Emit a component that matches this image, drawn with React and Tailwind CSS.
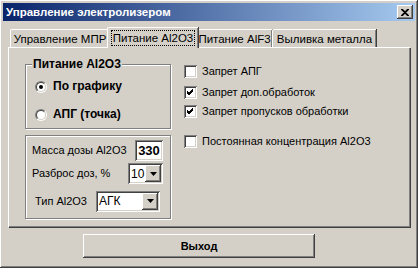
import React from 'react'

const raised =
  'shadow-[inset_-1px_-1px_#404040,inset_1px_1px_#ffffff,inset_-2px_-2px_#808080,inset_2px_2px_#d4d0c8]'
const sunken =
  'shadow-[inset_1px_1px_#808080,inset_-1px_-1px_#ffffff,inset_2px_2px_#404040,inset_-2px_-2px_#d4d0c8]'

function Check({ checked }) {
  return (
    <div className={`w-[13px] h-[13px] bg-white shrink-0 flex items-center justify-center ${sunken}`}>
      {checked && (
        <svg width="7" height="7" viewBox="0 0 7 7">
          <path d="M0 2 L2 4 L6 0 M0 3 L2 5 L6 1 M0 4 L2 6 L6 2" stroke="#000" strokeWidth="1" fill="none" />
        </svg>
      )}
    </div>
  )
}

function Radio({ on }) {
  return (
    <div className="relative w-[12px] h-[12px] shrink-0">
      <div className="absolute inset-0 rounded-full border border-t-[#808080] border-l-[#808080] border-r-white border-b-white" />
      <div className="absolute inset-[1px] rounded-full border border-t-[#404040] border-l-[#404040] border-r-[#d4d0c8] border-b-[#d4d0c8] bg-white flex items-center justify-center">
        {on && <div className="w-[4px] h-[4px] rounded-full bg-black" />}
      </div>
    </div>
  )
}

function Tab({ label, active, w }) {
  return (
    <div
      style={{ width: w }}
      className={
        active
          ? 'relative z-10 h-[21px] -mb-px -mx-[2px] bg-[#d4d0c8] border-t border-l border-white rounded-tl-[2px] shadow-[inset_-1px_0_#808080,1px_0_#404040] flex items-start justify-center pt-[3px]'
          : 'h-[18px] bg-[#d4d0c8] border-t border-l border-white rounded-tl-[2px] shadow-[inset_-1px_0_#808080,1px_0_#404040] flex items-start justify-center pt-[2px]'
      }
    >
      <span className={active ? 'outline outline-1 outline-dotted outline-black px-[1px] leading-[14px]' : 'leading-[14px]'}>
        {label}
      </span>
    </div>
  )
}

function Combo({ value, w }) {
  return (
    <div style={{ width: w }} className={`h-[21px] bg-white flex items-center p-[2px] ${sunken}`}>
      <span className="flex-1 pl-[1px] text-[12px] leading-none">{value}</span>
      <div className={`w-[16px] h-[17px] bg-[#d4d0c8] flex items-center justify-center ${raised}`}>
        <svg width="7" height="4" viewBox="0 0 7 4">
          <path d="M0 0 H7 L3.5 4 Z" fill="#000" />
        </svg>
      </div>
    </div>
  )
}

export default function App() {
  return (
    <div
      className={`w-[418px] h-[268px] bg-[#d4d0c8] p-[3px] flex flex-col text-[11px] leading-[13px] text-black whitespace-nowrap ${raised}`}
      style={{ fontFamily: '"Liberation Sans", Arial, sans-serif' }}
    >
      {/* Заголовок окна */}
      <div className="h-[18px] bg-[linear-gradient(to_right,#0a246a,#a6caf0)] flex items-center pl-[3px] pr-[2px]">
        <span className="flex-1 text-white font-bold text-[11.5px]">Управление электролизером</span>
        <div className={`w-[16px] h-[14px] bg-[#d4d0c8] flex items-center justify-center ${raised}`}>
          <svg width="8" height="7" viewBox="0 0 8 7">
            <path d="M0 0 L7 7 M1 0 L8 7 M7 0 L0 7 M8 0 L1 7" stroke="#000" strokeWidth="1.2" />
          </svg>
        </div>
      </div>

      <div className="ml-[5px] mr-[5px] mt-[6px] flex flex-col">
        {/* Вкладки */}
        <div className="flex items-end pl-[2px] h-[20px] text-[11.5px]">
          <Tab label="Управление МПР" w={99} />
          <Tab label="Питание Al2O3" w={91} active />
          <Tab label="Питание AlF3" w={76} />
          <Tab label="Выливка металла" w={104} />
        </div>

        {/* Панель */}
        <div className="h-[180px] border-t border-l border-white shadow-[inset_-1px_-1px_#808080,1px_1px_#404040] flex pl-[16px] pt-[16px]">
          <div className="w-[146px] flex flex-col">
            <div className="relative h-[65px] border border-[#808080] shadow-[inset_1px_1px_#ffffff,1px_1px_#ffffff] flex flex-col pl-[9px] pt-[15px] gap-[15px] text-[12px]">
              <span className="absolute -top-[8px] left-[6px] bg-[#d4d0c8] px-[1px] font-bold leading-[15px]">Питание Al2O3</span>
              <div className="flex items-center gap-[6px] font-bold h-[13px]">
                <Radio on />
                <span>По графику</span>
              </div>
              <div className="flex items-center gap-[6px] font-bold h-[13px]">
                <Radio />
                <span>АПГ (точка)</span>
              </div>
            </div>

            <div className="mt-[6px] h-[84px] border border-[#808080] shadow-[inset_1px_1px_#ffffff,1px_1px_#ffffff] flex flex-col pt-[4px] pl-[6px] pr-[7px]">
              <div className="flex items-center justify-between h-[21px]">
                <span>Масса дозы Al2O3</span>
                <div className={`w-[28px] h-[21px] bg-white flex items-center justify-center font-bold text-[13px] ${sunken}`}>330</div>
              </div>
              <div className="flex items-center justify-between h-[21px] mt-[2px]">
                <span>Разброс доз, %</span>
                <Combo value="10" w={35} />
              </div>
              <div className="flex items-center h-[22px] mt-[6px] pl-[3px]">
                <span className="w-[61px]">Тип Al2O3</span>
                <Combo value="АГК" w={64} />
              </div>
            </div>
          </div>

          <div className="ml-[13px] flex flex-col pt-[1px]">
            <div className="flex items-center gap-[5px] h-[13px]">
              <Check />
              <span>Запрет АПГ</span>
            </div>
            <div className="flex items-center gap-[5px] h-[13px] mt-[8px]">
              <Check checked />
              <span>Запрет доп.обработок</span>
            </div>
            <div className="flex items-center gap-[5px] h-[13px] mt-[6px]">
              <Check checked />
              <span>Запрет пропусков обработки</span>
            </div>
            <div className="flex items-center gap-[5px] h-[13px] mt-[17px]">
              <Check />
              <span>Постоянная концентрация Al2O3</span>
            </div>
          </div>
        </div>

        {/* Кнопка */}
        <div className="flex mt-[7px] pl-[75px]">
          <div className={`w-[232px] h-[24px] flex items-center justify-center font-bold ${raised}`}>Выход</div>
        </div>
      </div>
    </div>
  )
}
